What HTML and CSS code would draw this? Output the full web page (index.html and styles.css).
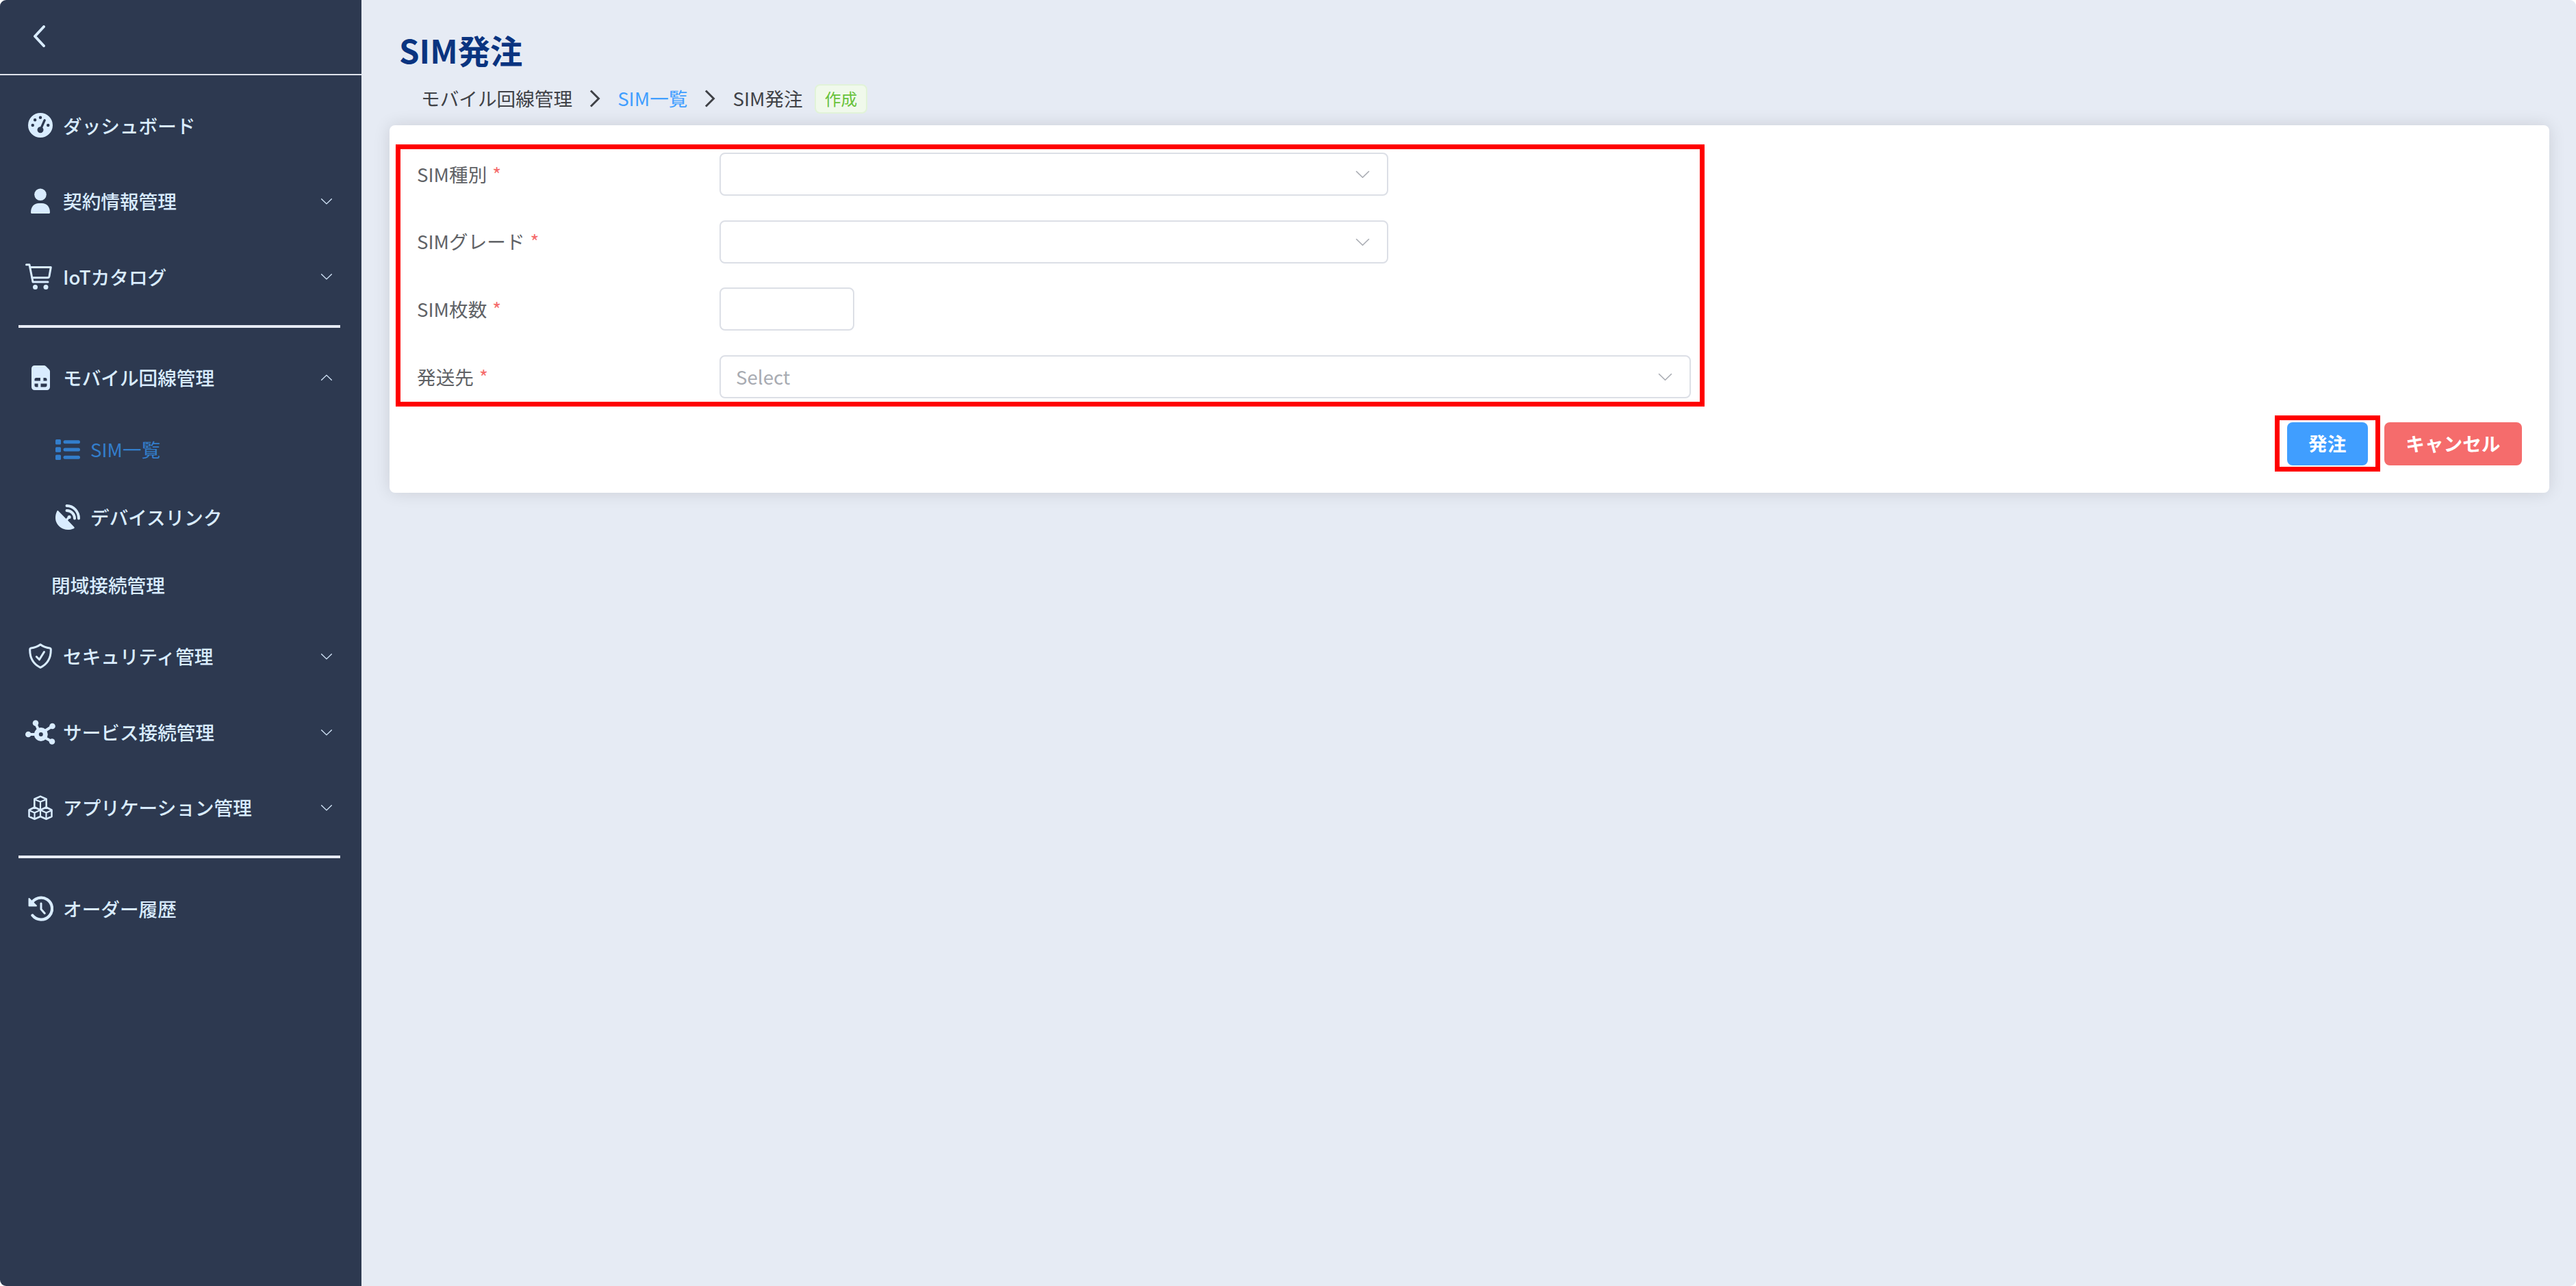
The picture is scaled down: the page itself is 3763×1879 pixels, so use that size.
FILE: index.html
```html
<!DOCTYPE html>
<html lang="ja">
<head>
  <meta charset="UTF-8">
  <meta name="viewport" content="width=device-width, initial-scale=1.0">
  <title>SIM発注</title>
  <link rel="stylesheet" href="styles.css">
</head>
<body>
  <svg class="sprite" width="0" height="0">
    <symbol id="arrow" viewBox="0 0 1024 1024">
      <path fill="currentColor" d="M831.872 340.864 512 652.672 192.128 340.864a30.592 30.592 0 0 0-42.752 0 29.12 29.12 0 0 0 0 41.6L489.664 714.24a32 32 0 0 0 44.672 0l340.288-331.712a29.12 29.12 0 0 0 0-41.728 30.592 30.592 0 0 0-42.752 0z"/>
    </symbol>
  </svg>

  <div class="layout">
    <aside class="sidebar">
      <div class="sidebar-head">
        <svg class="back" viewBox="0 0 18 32"><path d="M16 2 3 16l13 14" fill="none" stroke="currentColor" stroke-width="4" stroke-linecap="round" stroke-linejoin="round"/></svg>
      </div>

      <nav class="menu">
        <a class="item">
          <span class="icon">
            <svg width="36" height="36" viewBox="0 0 512 512"><path fill="currentColor" d="M0 256a256 256 0 1 1 512 0A256 256 0 1 1 0 256zM288 96a32 32 0 1 0-64 0 32 32 0 1 0 64 0zM256 416c35.300 0 64-28.700 64-64 0-17.400-6.900-33.100-18.100-44.600L366 161.700c5.300-12.100-.2-26.300-12.300-31.600s-26.300 .2-31.600 12.300L257.900 288H256c-35.300 0-64 28.700-64 64s28.700 64 64 64zM176 144a32 32 0 1 0-64 0 32 32 0 1 0 64 0zM96 288a32 32 0 1 0 0-64 32 32 0 1 0 0 64zm352-32a32 32 0 1 0-64 0 32 32 0 1 0 64 0z"/></svg>
          </span>
          <span>ダッシュボード</span>
        </a>
        <a class="item">
          <span class="icon">
            <svg width="28" height="37" viewBox="0 0 28 37"><circle cx="14" cy="9.300" r="8.800" fill="currentColor"/><path fill="currentColor" d="M0 35.500C0 27 5 22 11.500 22h5C23 22 28 27 28 35.500c0 .9-.6 1.500-1.500 1.500h-25C.6 37 0 36.400 0 35.500z"/></svg>
          </span>
          <span>契約情報管理</span>
          <svg class="arrow"><use href="#arrow"/></svg>
        </a>
        <a class="item">
          <span class="icon icon-cart">
            <svg width="39" height="38" viewBox="0 0 39 38"><g fill="none" stroke="currentColor" stroke-width="3" stroke-linecap="round" stroke-linejoin="round"><path d="M1.500 1.800H6l5 25.200h22"/><path d="M7.300 5.500h30L35 18.500c-.3 1.500-1 2.300-2.500 2.300H10"/></g><circle cx="14.500" cy="34.500" r="3.500" fill="currentColor"/><circle cx="30" cy="34.500" r="3.500" fill="currentColor"/></svg>
          </span>
          <span>IoTカタログ</span>
          <svg class="arrow"><use href="#arrow"/></svg>
        </a>

        <hr class="divider">

        <a class="item">
          <span class="icon">
            <svg width="27" height="36" viewBox="0 0 384 512"><path fill="currentColor" fill-rule="evenodd" d="M64 0C28.700 0 0 28.700 0 64v384c0 35.300 28.700 64 64 64h256c35.300 0 64-28.700 64-64V128c0-17-6.700-33.300-18.700-45.300L301.300 18.700C289.300 6.700 273 0 256 0H64zm32 256h88v64H64v-32c0-17.700 14.300-32 32-32zm152 0h40c17.700 0 32 14.300 32 32v32h-72v-64zM64 376h72v72H96c-17.700 0-32-14.300-32-32v-40zm128 0h128v40c0 17.700-14.300 32-32 32h-96v-72z"/></svg>
          </span>
          <span>モバイル回線管理</span>
          <svg class="arrow arrow-up"><use href="#arrow"/></svg>
        </a>
        <div class="submenu">
          <a class="subitem active">
            <span class="icon">
              <svg width="36" height="30" viewBox="0 0 36 30" fill="currentColor"><rect width="8" height="7.500" rx="1.500"/><rect y="11.200" width="8" height="7.500" rx="1.500"/><rect y="22.500" width="8" height="7.500" rx="1.500"/><rect x="11.500" y="1.200" width="24.500" height="5" rx="2.500"/><rect x="11.500" y="12.500" width="24.500" height="5" rx="2.500"/><rect x="11.500" y="23.800" width="24.500" height="5" rx="2.500"/></svg>
            </span>
            <span>SIM一覧</span>
          </a>
          <a class="subitem">
            <span class="icon">
              <svg width="36" height="37" viewBox="0 0 36 37"><path fill="currentColor" d="M4.200 9.500 15.500 21l2-2.200a2.600 2.600 0 1 1 2.400 2.300L18 23.300 27.300 33c.6.700.5 1.700-.4 2.200C23.800 36.600 21 37 18 37 8 37 0 29 0 19.500 0 16 .8 12.800 2.200 9.900c.4-.9 1.300-1.100 2-.4z"/><path d="M16.500 2C26.500 2 34 10.500 34 20.500M16.500 9C23 9 28 14 28 20.500" fill="none" stroke="currentColor" stroke-width="4" stroke-linecap="round"/></svg>
            </span>
            <span>デバイスリンク</span>
          </a>
          <a class="subitem plain"><span>閉域接続管理</span></a>
        </div>
        <a class="item">
          <span class="icon">
            <svg width="34" height="37" viewBox="0 0 34 37" fill="none" stroke="currentColor" stroke-width="3" stroke-linecap="round" stroke-linejoin="round"><path d="M17 1.700C12.500 5 8 6.300 3.400 7c-1 .2-1.700 1-1.700 2C1.500 20.500 6 30 17 35.300 28 30 32.500 20.500 32.300 9c0-1-.7-1.800-1.700-2C26 6.300 21.500 5 17 1.700z"/><path d="m11.300 19.500 4.200 4.300 7-11.300"/></svg>
          </span>
          <span>セキュリティ管理</span>
          <svg class="arrow"><use href="#arrow"/></svg>
        </a>
        <a class="item">
          <span class="icon">
            <svg width="44" height="36" viewBox="0 0 44 36"><g stroke="currentColor" stroke-width="4" fill="none"><path d="M4 21h11M15 5l5 11M39.500 9 27 17M39 31.500 27 25"/><circle cx="22.800" cy="21" r="6.500" stroke-width="7"/></g><g fill="currentColor"><circle cx="4.300" cy="21" r="4.300"/><circle cx="15" cy="4.500" r="4.300"/><circle cx="39.500" cy="9" r="4.300"/><circle cx="39" cy="31.500" r="4.300"/></g></svg>
          </span>
          <span>サービス接続管理</span>
          <svg class="arrow"><use href="#arrow"/></svg>
        </a>
        <a class="item">
          <span class="icon">
            <svg width="36" height="36" viewBox="0 0 36 36" fill="none" stroke="currentColor" stroke-width="2.600" stroke-linejoin="round"><path d="M9.300 17V5.500L18 1.600l8.700 3.900V17"/><path d="m1.500 21.500 8-4 8.500 4 8.500-4 8 4V31l-8 3.700L18 31l-8.500 3.700-8-3.700z"/><path stroke-width="2.200" d="m10.500 6.500 7.500 3 7.500-3M18 9.500V31M2.500 22.500l7 3 8.500-4 8.500 4 7-3M9.500 25.500v9M26.500 25.500v9"/></svg>
          </span>
          <span>アプリケーション管理</span>
          <svg class="arrow"><use href="#arrow"/></svg>
        </a>

        <hr class="divider">

        <a class="item">
          <span class="icon">
            <svg width="37" height="37" viewBox="0 0 37 37" fill="none" stroke="currentColor" stroke-linecap="round" stroke-linejoin="round"><path stroke-width="4.300" d="M4.500 12A16 16 0 1 1 6.500 28.500"/><path fill="currentColor" stroke-width="2" d="M1.500 4v10.500H12z"/><path stroke-width="3" d="M19 11v8.500l5.300 6"/></svg>
          </span>
          <span>オーダー履歴</span>
        </a>
      </nav>
    </aside>

    <main class="main">
      <h1>SIM発注</h1>
      <div class="breadcrumb">
        <span>モバイル回線管理</span>
        <svg class="sep" viewBox="0 0 16 26"><path d="m2 1.500 11.500 11.500L2 24.500"/></svg>
        <a class="link">SIM一覧</a>
        <svg class="sep" viewBox="0 0 16 26"><path d="m2 1.500 11.500 11.500L2 24.500"/></svg>
        <span>SIM発注</span>
        <span class="tag">作成</span>
      </div>

      <div class="card">
        <div class="form">
          <div class="field">
            <label>SIM種別<span class="required">*</span></label>
            <div class="select"><svg class="caret"><use href="#arrow"/></svg></div>
          </div>
          <div class="field">
            <label>SIMグレード<span class="required">*</span></label>
            <div class="select"><svg class="caret"><use href="#arrow"/></svg></div>
          </div>
          <div class="field">
            <label>SIM枚数<span class="required">*</span></label>
            <div class="select select-short"></div>
          </div>
          <div class="field">
            <label>発送先<span class="required">*</span></label>
            <div class="select select-wide"><span>Select</span><svg class="caret"><use href="#arrow"/></svg></div>
          </div>
        </div>
        <div class="actions">
          <div class="highlight"><button class="btn btn-primary">発注</button></div>
          <button class="btn btn-danger">キャンセル</button>
        </div>
      </div>
    </main>
  </div>
</body>
</html>
```

FILE: styles.css
```css
* { margin: 0; padding: 0; box-sizing: border-box; }
body { font-family: "Noto Sans CJK JP", sans-serif; font-size: 27.65px; line-height: 1.5; background: #fff; color: #303133; }
.sprite { display: block; }
.layout { display: flex; height: 1879px; background: #e6ebf4; border-radius: 9px; overflow: hidden; }

.sidebar { width: 528px; flex-shrink: 0; background: #2d3950; color: #d9ecff; }
.sidebar-head { height: 110px; padding: 37px 0 0 48px; border-bottom: 2px solid #dfe3ec; }
.back { display: block; width: 18px; height: 32px; }
.menu { padding-top: 18px; }
.item { display: flex; align-items: center; height: 110.6px; padding: 0 40px 0 37px; font-weight: 500; }
.icon { display: flex; align-items: center; justify-content: center; width: 44px; margin-right: 11px; flex-shrink: 0; }
.icon svg { display: block; flex-shrink: 0; }
.icon-cart { justify-content: flex-start; }
.arrow { width: 22px; height: 22px; margin-left: auto; }
.arrow-up { transform: rotate(180deg); }
.divider { height: 4px; border: none; background: #e6ebf4; margin: 15px 31px 18px 27px; }
.subitem { display: flex; align-items: center; height: 98.75px; padding-left: 77px; font-weight: 500; }
.subitem.active { color: #337ecc; font-weight: 400; }
.subitem.plain { padding-left: 75px; }

.main { flex: 1; padding: 37px 39px 0 41px; }
h1 { font-size: 47.4px; line-height: 71px; font-weight: 700; color: #0a3480; padding-left: 14px; }
.breadcrumb { display: flex; align-items: center; height: 44px; margin: 14px 0 17px; padding-left: 46px; color: #404247; }
.sep { width: 16px; height: 26px; margin: 0 25px; fill: none; stroke: #404247; stroke-width: 3; }
.link { color: #409eff; }
.tag { height: 43px; line-height: 39px; margin-left: 17px; padding: 0 13px; font-size: 23.7px; color: #67c23a; background: #f0f9eb; border: 2px solid #e1f3d8; border-radius: 8px; }

.card { height: 537px; background: #fff; border-radius: 8px; padding: 28px 40px 0 9px; box-shadow: 0 0 24px rgba(0,0,0,0.12); }
.form { width: 1912px; height: 383px; border: 7px solid #f00; padding: 5px 0 0 24px; }
.field { display: flex; align-items: center; height: 63px; margin-bottom: 35.6px; }
.field label { width: 442px; color: #606266; }
.required { color: #f56c6c; margin-left: 8px; }
.select { display: flex; align-items: center; width: 977px; height: 63px; padding: 0 22px; border: 2px solid #dcdfe6; border-radius: 8px; color: #a8abb2; }
.select-short { width: 197px; }
.select-wide { width: 1419px; }
.caret { width: 27px; height: 27px; margin-left: auto; color: #a8abb2; }
.actions { display: flex; justify-content: flex-end; align-items: center; gap: 6px; margin-top: 13px; }
.highlight { border: 7px solid #f00; padding: 3px 11px 2px; }
.btn { display: block; height: 63px; padding: 0 31.5px 3px; font: 700 27.65px "Noto Sans CJK JP", sans-serif; color: #fff; border: none; border-radius: 8px; }
.btn-primary { background: #409eff; }
.btn-danger { background: #f56c6c; }
```
